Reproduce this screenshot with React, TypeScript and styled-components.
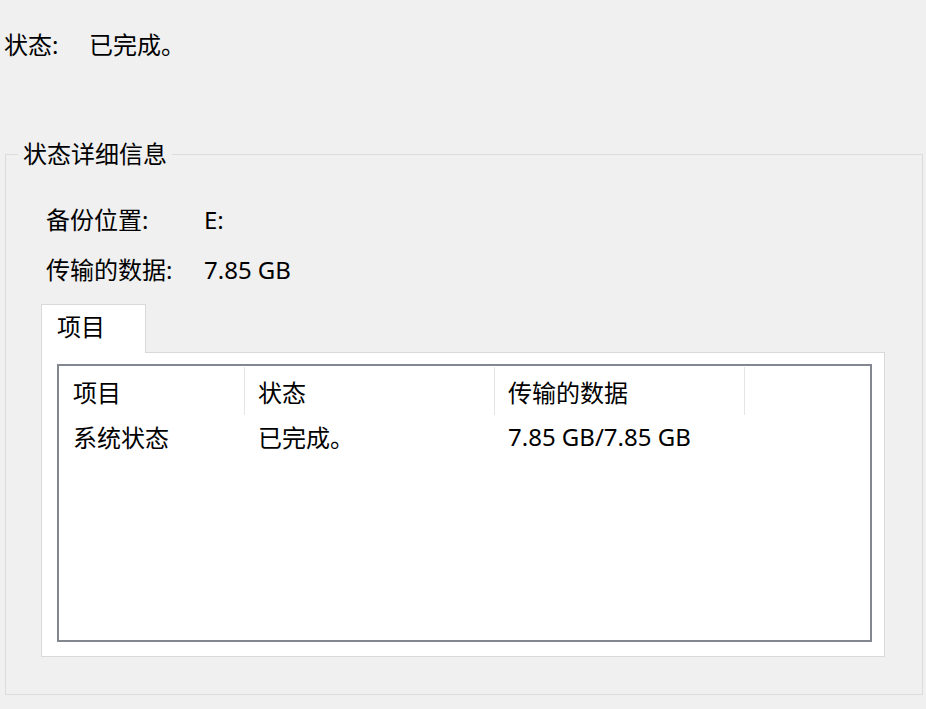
import React from "react";
import styled, { createGlobalStyle } from "styled-components";

const GlobalStyle = createGlobalStyle`
  html, body {
    margin: 0;
    padding: 0;
    background: #f0f0f0;
  }
  body {
    font-family: "Noto Sans", "Noto Sans CJK SC", sans-serif;
    font-size: 24px;
    color: #000;
  }
`;

const Page = styled.div`
  width: 926px;
  height: 709px;
  overflow: hidden;
  background: #f0f0f0;
  display: flex;
  flex-direction: column;
`;

const StatusRow = styled.div`
  display: flex;
  align-items: center;
  height: 32px;
  line-height: 32px;
  margin-top: 29px;
  padding-left: 4px;
`;

const StatusLabel = styled.span`
  width: 85px;
`;

const Group = styled.fieldset`
  margin: 77px 3px 0 5px;
  padding: 0 37px 37px 35px;
  border: 1px solid #dcdcdc;
  min-width: 0;
`;

const Legend = styled.legend`
  margin-left: -23px;
  padding: 0 5px;
  line-height: 32px;
  height: 32px;
`;

const InfoList = styled.div`
  display: flex;
  flex-direction: column;
  gap: 18px;
  padding: 34px 0 0 5px;
`;

const InfoRow = styled.div`
  display: flex;
  height: 32px;
  line-height: 32px;
`;

const InfoLabel = styled.span`
  width: 158px;
`;

const TabStrip = styled.div`
  display: flex;
  margin-top: 18px;
`;

const Tab = styled.div<{ $active?: boolean }>`
  position: relative;
  z-index: 1;
  box-sizing: border-box;
  width: 105px;
  padding: 6px 15px 10px;
  line-height: 32px;
  background: ${(p) => (p.$active ? "#fff" : "#f0f0f0")};
  border: 1px solid #d9d9d9;
  border-bottom: none;
  margin-bottom: -1px;
`;

const TabPanel = styled.div`
  background: #fff;
  border: 1px solid #d9d9d9;
  padding: 11px 12px 14px 15px;
`;

const ListView = styled.div`
  box-sizing: border-box;
  height: 278px;
  border: 2px solid #828790;
  background: #fff;
`;

const Row = styled.div<{ $header?: boolean }>`
  display: grid;
  grid-template-columns: 186px 250px 250px 1fr;
  height: ${(p) => (p.$header ? "50px" : "41px")};
  align-items: stretch;
`;

const HeaderCell = styled.div<{ $first?: boolean; $last?: boolean }>`
  display: flex;
  align-items: center;
  padding-left: ${(p) => (p.$first ? "14px" : "13px")};
  margin: 1px 0;
  border-right: ${(p) => (p.$last ? "none" : "1px solid #e5e5e5")};
  white-space: nowrap;
`;

const Cell = styled.div<{ $first?: boolean }>`
  display: flex;
  align-items: center;
  padding-left: ${(p) => (p.$first ? "14px" : "13px")};
  white-space: nowrap;
`;

export default function App() {
  return (
    <Page>
      <GlobalStyle />
      <StatusRow>
        <StatusLabel>状态:</StatusLabel>
        <span>已完成。</span>
      </StatusRow>
      <Group>
        <Legend>状态详细信息</Legend>
        <InfoList>
          <InfoRow>
            <InfoLabel>备份位置:</InfoLabel>
            <span>E:</span>
          </InfoRow>
          <InfoRow>
            <InfoLabel>传输的数据:</InfoLabel>
            <span>7.85 GB</span>
          </InfoRow>
        </InfoList>
        <TabStrip>
          <Tab $active>项目</Tab>
        </TabStrip>
        <TabPanel>
          <ListView>
            <Row $header>
              <HeaderCell $first>项目</HeaderCell>
              <HeaderCell>状态</HeaderCell>
              <HeaderCell>传输的数据</HeaderCell>
              <HeaderCell $last />
            </Row>
            <Row>
              <Cell $first>系统状态</Cell>
              <Cell>已完成。</Cell>
              <Cell>7.85 GB/7.85 GB</Cell>
              <Cell />
            </Row>
          </ListView>
        </TabPanel>
      </Group>
    </Page>
  );
}
